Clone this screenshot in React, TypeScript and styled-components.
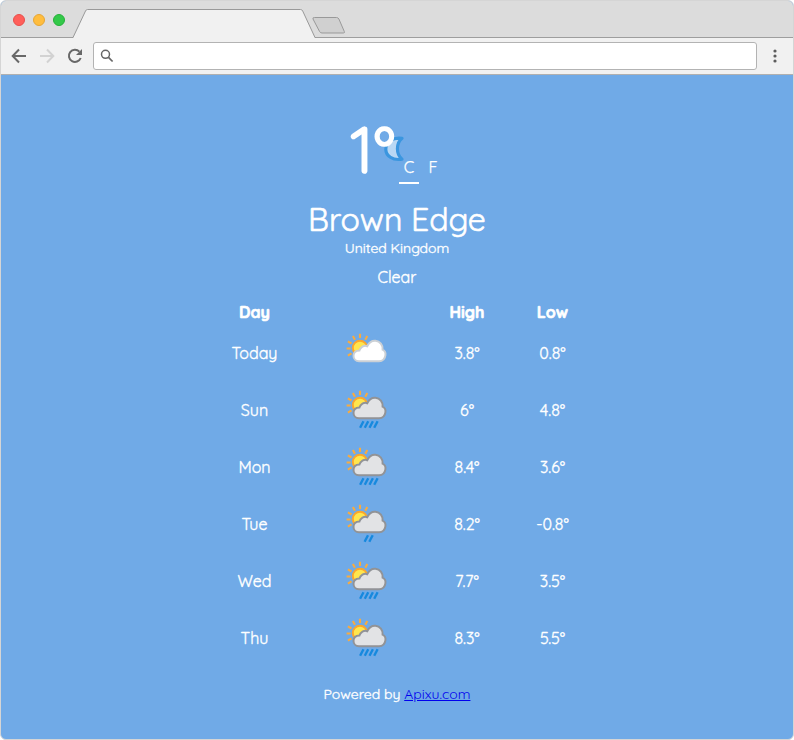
import React from "react";
import styled, { createGlobalStyle } from "styled-components";

const GlobalStyle = createGlobalStyle`
  *, *::before, *::after { box-sizing: border-box; }
  body { margin: 0; background: #fff; }
`;

const Browser = styled.div`
  width: 794px;
  height: 740px;
  display: flex;
  flex-direction: column;
  overflow: hidden;
  border: 1px solid #d5d5d5;
  border-radius: 6px;
  background: #70aae7;
  color: #fff;
  font-family: Quicksand, Lato, "Open Sans", sans-serif;
`;

const TabStrip = styled.div`
  display: flex;
  align-items: flex-end;
  height: 37px;
  flex: none;
  background: #dcdcdc;
  border-bottom: 1px solid #9e9e9e;
`;

const WindowButtons = styled.div`
  display: flex;
  gap: 8px;
  padding: 0 8px 11px 12px;
  width: 71px;
`;

const WindowButton = styled.span<{ $fill: string; $edge: string }>`
  flex: none;
  width: 12px;
  height: 12px;
  border-radius: 50%;
  background: ${(p) => p.$fill};
  border: 1px solid ${(p) => p.$edge};
`;

const TabShape = styled.svg`
  display: block;
  flex: none;
  margin-bottom: -1px;
`;

const NewTab = styled.svg`
  display: block;
  flex: none;
  margin: 0 0 3px -4px;
`;

const Toolbar = styled.div`
  display: flex;
  align-items: center;
  flex: none;
  height: 37px;
  background: #f1f1f1;
  border-bottom: 1px solid #b0b0b0;
`;

const NavButtons = styled.div`
  display: flex;
  gap: 12px;
  padding: 0 9px 0 10px;
  width: 92px;
`;

const Glyph = styled.svg`
  display: block;
  flex: none;
`;

const AddressBar = styled.div`
  display: flex;
  align-items: center;
  width: 664px;
  height: 28px;
  padding-left: 6px;
  border: 1px solid #b3b3b3;
  border-radius: 3px;
  background: #fff;
`;

const MenuDots = styled(Glyph)`
  margin-left: 16px;
`;

const Page = styled.main`
  display: flex;
  flex-direction: column;
  align-items: center;
  flex: 1;
  padding-top: 42px;
  -webkit-text-stroke: 0.35px currentColor;
`;

const Current = styled.section`
  display: flex;
  align-items: flex-end;
  width: 100px;
  height: 67px;
  margin-left: 6px;
`;

const Temperature = styled.div`
  position: relative;
  width: 49px;
  height: 67px;
  flex: none;
`;

const Reading = styled.div`
  position: relative;
  font-size: 64px;
  line-height: 65px;
  white-space: nowrap;
  -webkit-text-stroke: 1.7px #fff;
`;

const Moon = styled.svg`
  position: absolute;
  left: 32px;
  top: 18px;
`;

const Units = styled.div`
  display: flex;
  gap: 4px;
`;

const Unit = styled.span<{ $active?: boolean }>`
  width: 20px;
  height: 28px;
  text-align: center;
  font-size: 16px;
  line-height: 23px;
  -webkit-text-stroke: 0.25px currentColor;
  border-bottom: 2px solid ${(p) => (p.$active ? "#fff" : "transparent")};
`;

const City = styled.h1`
  margin: 15px 0 0;
  font-size: 32px;
  font-weight: 400;
  line-height: 40px;
  -webkit-text-stroke: 0.6px currentColor;
`;

const Country = styled.div`
  font-size: 14px;
  line-height: 18px;
`;

const Condition = styled.div`
  margin-top: 10px;
  font-size: 16px;
  line-height: 20px;
`;

const Forecast = styled.section`
  width: 400px;
  margin-top: 14px;
`;

const Row = styled.div<{ $head?: boolean }>`
  display: grid;
  grid-template-columns: 115px 109px 92px 79px;
  align-items: center;
  justify-items: center;
  height: ${(p) => (p.$head ? "22px" : "57px")};
  margin-bottom: ${(p) => (p.$head ? "1px" : "0")};
  font-size: 16px;
  font-weight: ${(p) => (p.$head ? 700 : 400)};
  -webkit-text-stroke-width: ${(p) => (p.$head ? "0.6px" : "0.35px")};
`;

const WeatherIcon = styled.svg`
  display: block;
  margin: 1px 0 0 2px;
`;

const Credit = styled.footer`
  margin-top: 19px;
  font-size: 14px;
  line-height: 18px;
  a {
    color: #0000ee;
    -webkit-text-stroke: 0;
  }
`;

type Weather = { day: string; high: string; low: string; drops: number };

const days: Weather[] = [
  { day: "Today", high: "3.8°", low: "0.8°", drops: 0 },
  { day: "Sun", high: "6°", low: "4.8°", drops: 4 },
  { day: "Mon", high: "8.4°", low: "3.6°", drops: 4 },
  { day: "Tue", high: "8.2°", low: "-0.8°", drops: 2 },
  { day: "Wed", high: "7.7°", low: "3.5°", drops: 4 },
  { day: "Thu", high: "8.3°", low: "5.5°", drops: 4 },
];

function SunCloud({ drops }: { drops: number }) {
  const firstDrop = drops === 4 ? 23.5 : 28;
  return (
    <WeatherIcon width="56" height="56" viewBox="0 0 56 56">
      <g stroke="#f8ab40" strokeWidth="2.1" fill="none">
        <path d="M20 8.8v4.2M12.9 11l2 3.7M27.3 11l-2 3.7M7.9 16.3l3.6 2.2M6.6 23.5H10.6M7.9 30.6l3.6-2.2" />
      </g>
      <circle cx="20" cy="23" r="7.2" fill="#ffe64d" stroke="#fba62d" strokeWidth="2" />
      <path
        d="M19 36.2C15.7 36.2 13.5 33.8 13.5 31C13.5 27.7 16 25.7 19.4 25.6C20.4 21.8 24 20.1 27.2 21.2C29.1 17.6 31.6 15.4 35.5 15.8C40 16.2 43 20 42.6 24.6C44.9 25.7 45.8 28 45.4 30.4C44.9 34 42.3 36.2 39 36.2Z"
        fill={drops ? "#e2e3e5" : "#fff"}
        stroke={drops ? "#919397" : "#cbd0d5"}
        strokeWidth="2"
      />
      {Array.from({ length: drops }, (_, i) => (
        <path key={i} d={`M${firstDrop + i * 4.7} 39.3l-3.4 6.4`} stroke="#1689de" strokeWidth="2.4" />
      ))}
    </WeatherIcon>
  );
}

export default function App() {
  return (
    <>
      <GlobalStyle />
      <Browser>
        <TabStrip>
          <WindowButtons>
            <WindowButton $fill="#ff5f5a" $edge="#e74f4b" />
            <WindowButton $fill="#ffbd3e" $edge="#e6a634" />
            <WindowButton $fill="#33c949" $edge="#25b039" />
          </WindowButtons>
          <TabShape width="244" height="29" viewBox="0 0 244 29">
            <path d="M1 29L13.5 2Q14.2.5 15.5.5H228.5Q230 .5 230.7 2L243 29Z" fill="#f1f1f1" />
            <path d="M0 28.5H1L13.5 2Q14.2.5 15.5.5H228.5Q230 .5 230.7 2L243 28.5H244" fill="none" stroke="#999" />
          </TabShape>
          <NewTab width="34" height="17" viewBox="0 0 34 17">
            <path d="M2.5.5H24.5Q26.1.5 26.9 2L32.3 14.5Q33 16 31.3 16H10Q8.3 16 7.5 14.4L1 2Q.4.5 2.5.5Z" fill="#d0d0d0" stroke="#999" />
          </NewTab>
        </TabStrip>
        <Toolbar>
          <NavButtons>
            <Glyph width="16" height="16" viewBox="0 0 16 16" fill="none" stroke="#686868" strokeWidth="2">
              <path d="M15 8H2M8 1.5L1.7 8L8 14.5" />
            </Glyph>
            <Glyph width="16" height="16" viewBox="0 0 16 16" fill="none" stroke="#d2d2d2" strokeWidth="2">
              <path d="M1 8H14M8 1.5L14.3 8L8 14.5" />
            </Glyph>
            <Glyph width="16" height="16" viewBox="0 0 16 16">
              <path d="M12.4 3.6A6.1 6.1 0 1 0 13.7 10" fill="none" stroke="#686868" strokeWidth="2" />
              <path d="M15 1V7H9Z" fill="#686868" />
            </Glyph>
          </NavButtons>
          <AddressBar>
            <Glyph width="14" height="14" viewBox="0 0 14 14" fill="none" stroke="#666">
              <circle cx="5.5" cy="5.3" r="4" strokeWidth="1.5" />
              <path d="M8.5 8.3L12.6 12.5" strokeWidth="1.7" />
            </Glyph>
          </AddressBar>
          <MenuDots width="4" height="14" viewBox="0 0 4 14" fill="#5c5c5c">
            <circle cx="2" cy="2" r="1.6" />
            <circle cx="2" cy="7" r="1.6" />
            <circle cx="2" cy="12" r="1.6" />
          </MenuDots>
        </Toolbar>
        <Page>
          <Current>
            <Temperature>
              <Moon width="24" height="28" viewBox="0 0 24 28">
                <path
                  d="M20 3.3C10.5 1.8 3.8 7.6 3.8 14.2C3.8 20.7 10.5 25.8 20 24.2C13.9 19 13.9 8.4 20 3.3Z"
                  fill="#b9d8f4"
                  stroke="#3b96df"
                  strokeWidth="3.2"
                  strokeLinejoin="round"
                />
              </Moon>
              <Reading>1°</Reading>
            </Temperature>
            <Units>
              <Unit $active>C</Unit>
              <Unit>F</Unit>
            </Units>
          </Current>
          <City>Brown Edge</City>
          <Country>United Kingdom</Country>
          <Condition>Clear</Condition>
          <Forecast>
            <Row $head>
              <span>Day</span>
              <span />
              <span>High</span>
              <span>Low</span>
            </Row>
            {days.map((d) => (
              <Row key={d.day}>
                <span>{d.day}</span>
                <SunCloud drops={d.drops} />
                <span>{d.high}</span>
                <span>{d.low}</span>
              </Row>
            ))}
          </Forecast>
          <Credit>
            Powered by <a href="#apixu">Apixu.com</a>
          </Credit>
        </Page>
      </Browser>
    </>
  );
}
